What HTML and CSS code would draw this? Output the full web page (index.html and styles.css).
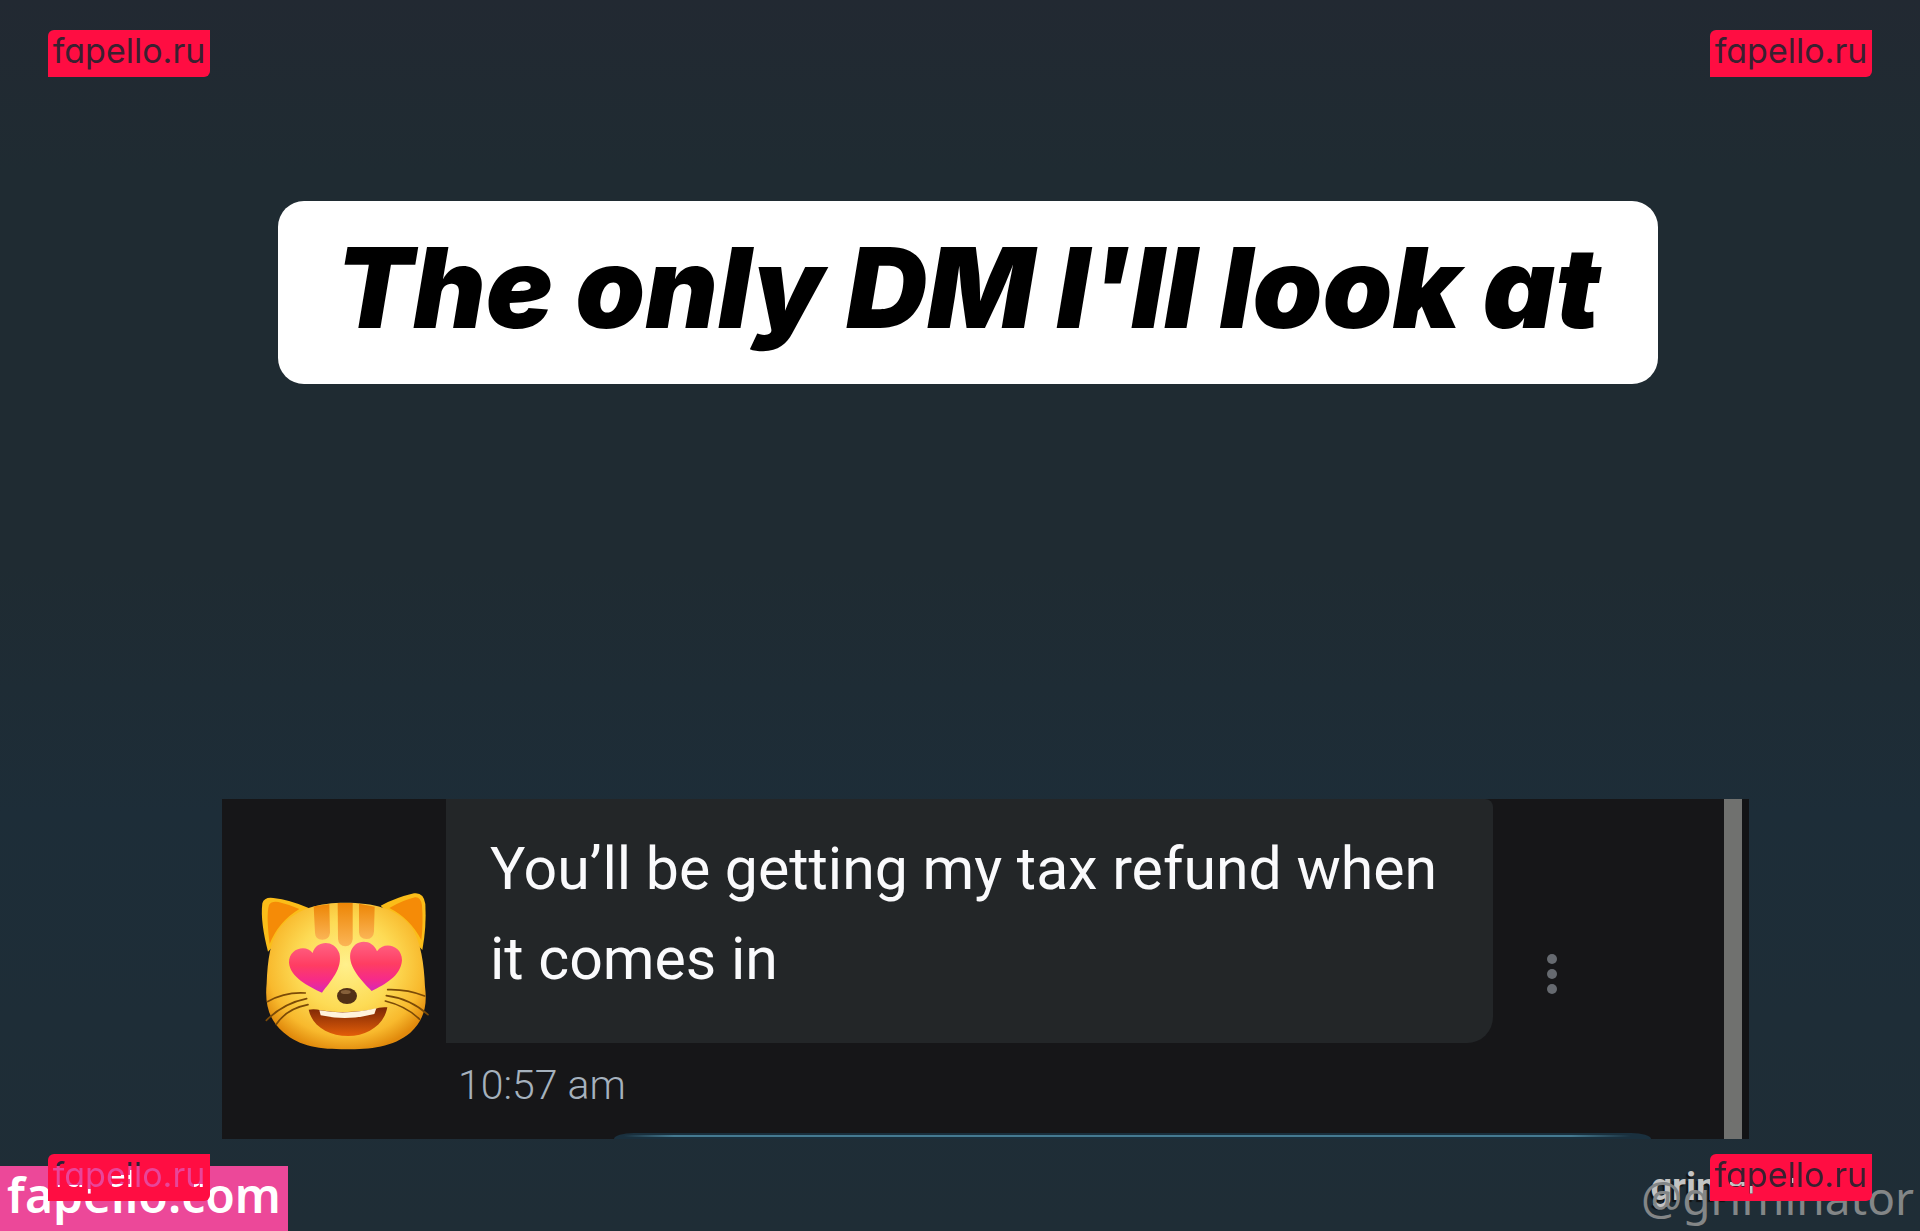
FILE: index.html
```html
<!DOCTYPE html>
<html lang="en">
<head>
<meta charset="utf-8">
<meta name="viewport" content="width=device-width, initial-scale=1">
<title>The only DM I'll look at</title>
<link rel="stylesheet" href="styles.css">
</head>
<body>
<main class="page">
  <h1 class="title">The only DM I'll look at</h1>

  <section class="chat">
    <div class="avatar">
      <svg viewBox="120 330 510 489" width="170" height="163" role="img" aria-label="Smiling cat with heart eyes">
        <defs>
          <radialGradient id="face" cx=".5" cy=".42" r=".6">
            <stop offset="0" stop-color="#fff08c"/>
            <stop offset=".5" stop-color="#fddb55"/>
            <stop offset=".82" stop-color="#f8b92d"/>
            <stop offset="1" stop-color="#e18a0c"/>
          </radialGradient>
          <linearGradient id="heart" x1="0" y1="0" x2="0" y2="1">
            <stop offset="0" stop-color="#ff6384"/>
            <stop offset=".45" stop-color="#ff3d62"/>
            <stop offset=".75" stop-color="#f62b88"/>
            <stop offset="1" stop-color="#d728b8"/>
          </linearGradient>
          <linearGradient id="stripe" x1="0" y1="0" x2="0" y2="1">
            <stop offset="0" stop-color="#ed8606"/>
            <stop offset="1" stop-color="#fbb556"/>
          </linearGradient>
          <linearGradient id="mouth" x1="0" y1="0" x2="0" y2="1">
            <stop offset="0" stop-color="#7b2605"/>
            <stop offset="1" stop-color="#e35e09"/>
          </linearGradient>
        </defs>
        <path d="M144 515C130 460 122 410 127 370Q133 350 160 354Q210 359 268 385Z" fill="#fbbd19"/>
        <path d="M149 492C143 440 140 400 147 375Q155 362 175 366Q210 374 238 387Q175 425 149 492Z" fill="#f58b07"/>
        <path d="M482 377Q530 352 582 340Q611 336 616 372Q620 440 607 510Z" fill="#fbbd19"/>
        <path d="M508 384Q550 360 585 352Q602 350 606 376Q610 430 604 480Q570 415 508 384Z" fill="#f58b07"/>
        <path d="M375 368C460 368 530 385 574 440C603 485 612 550 615 620C623 680 610 722 571 758C520 801 450 808 378 808C300 808 240 801 190 757C145 718 134 670 140 610C143 540 150 480 182 440C230 384 300 368 375 368Z" fill="url(#face)"/>
        <g fill="url(#stripe)">
          <path d="M281 379L328 373L330 458Q328 479 307 479Q286 479 285 458Z"/>
          <path d="M353 369H398V477Q396 499 376 499Q356 499 354 477Z"/>
          <path d="M417 371L464 380L462 455Q460 477 439 477Q418 477 417 457Z"/>
        </g>
        <g fill="url(#heart)">
          <path d="M306 638C265 619 210 590 207 548C206 503 260 492 278 519C287 481 343 476 358 520C369 565 331 605 306 638Z"/>
          <path d="M455 633C427 605 384 562 391 520C401 475 457 475 471 514C491 483 546 495 546 541C543 588 494 614 455 633Z"/>
        </g>
        <ellipse cx="381" cy="648" rx="30" ry="24" fill="#513016"/>
        <ellipse cx="377" cy="636" rx="15" ry="6" fill="#86603a"/>
        <path d="M266 689Q285 686 302 691Q380 704 462 688Q480 680 502 682C493 735 441 768 385 768C325 768 276 738 266 689Z" fill="url(#mouth)"/>
        <path d="M298 691Q382 706 469 685L463 702Q382 724 302 706Z" fill="#fff3dc"/>
        <g fill="none" stroke="#7b4a07" stroke-width="5" stroke-linecap="round">
          <path d="M256 639Q195 635 142 665"/>
          <path d="M260 656Q190 670 139 721"/>
          <path d="M264 674Q200 686 169 733"/>
          <path d="M503 629Q560 627 614 648"/>
          <path d="M499 647Q570 656 624 704"/>
          <path d="M496 663Q560 679 599 718"/>
        </g>
      </svg>
    </div>
    <div class="thread">
      <p class="bubble">You’ll be getting my tax refund when it comes in</p>
      <time class="time" datetime="10:57">10:57 am</time>
      <div class="next-bubble"></div>
    </div>
    <div class="actions">
      <button class="more" type="button" aria-label="More options">
        <svg viewBox="0 0 10 40" width="10" height="40" aria-hidden="true">
          <g fill="#666a70"><circle cx="5" cy="5" r="5"/><circle cx="5" cy="20" r="5"/><circle cx="5" cy="35" r="5"/></g>
        </svg>
      </button>
    </div>
    <div class="scrollbar"></div>
  </section>
</main>

<a class="site" href="#">fapello.com</a>
<span class="author">grim</span>
<span class="handle">@griminator</span>
<a class="badge top left" href="#"><span>fapello.ru</span></a>
<a class="badge top right" href="#"><span>fapello.ru</span></a>
<a class="badge bottom left" href="#"><span class="over-site">fapello.ru</span></a>
<a class="badge bottom right" href="#"><span class="over-author">fapello.ru</span></a>
</body>
</html>
```
FILE: styles.css
```css
* { box-sizing: border-box; }

body {
  position: relative;
  margin: 0;
  min-height: 100vh;
  overflow-x: hidden;
  background: linear-gradient(#222932 0%, #1f2b32 14%, #1f2b32 46%, #1d2d38 66%, #1f2d36 100%);
  font-family: Roboto, "Liberation Sans", sans-serif;
}

a { text-decoration: none; }

.page {
  display: flex;
  flex-direction: column;
  gap: 415px;
  padding: 201px 171px 92px 222px;
}

.title {
  margin: 0 91px 0 56px;
  padding: 24px 0 35px;
  border-radius: 26px;
  background: #fff;
  color: #000;
  font: italic 900 112px/124px Inter, sans-serif;
  text-align: center;
  white-space: nowrap;
}

.chat {
  display: flex;
  min-height: 340px;
  background: #161618;
}

.avatar {
  flex: 0 0 224px;
  padding: 91px 0 0 38px;
}

.avatar svg { display: block; }

.thread {
  display: flex;
  flex: 1;
  flex-direction: column;
}

.bubble {
  margin: 0;
  padding: 25px 24px 39px 44px;
  border-radius: 0 8px 26px 0;
  background: #232628;
  color: #fafafc;
  font-size: 59px;
  line-height: 90px;
}

.time {
  padding: 16px 12px 0;
  color: #a5b1bd;
  font-size: 41px;
  font-weight: 300;
  line-height: 52px;
}

.next-bubble {
  height: 6px;
  margin: auto -158px 0 168px;
  border-radius: 20px 20px 0 0 / 6px 6px 0 0;
  background:
    linear-gradient(90deg, transparent 10px, #457a91 60px, #457a91 calc(100% - 80px), transparent calc(100% - 20px)) 0 2px / 100% 2px no-repeat,
    #1a303e;
}

.actions {
  flex: 0 0 231px;
  padding: 155px 0 0 54px;
}

.more {
  display: block;
  padding: 0;
  border: 0;
  background: none;
  cursor: pointer;
}

.more svg { display: block; }

.scrollbar {
  flex: 0 0 25px;
  border-right: 7px solid #121315;
  background: #70716f;
}

.badge {
  position: absolute;
  width: 162px;
  height: 47px;
  border-radius: 6px 0;
  background: #ff0d42;
  color: #3a2030;
  font: 400 34px/42px Inter, sans-serif;
  font-feature-settings: "cv11";
  text-align: center;
  white-space: nowrap;
}

.top { top: 30px; }
.bottom { bottom: 30px; }
.left { left: 48px; }
.right { right: 48px; }

.badge span { display: block; }

.over-site {
  background:
    linear-gradient(#fff, #fff) 10px 31px / 24px 4px no-repeat,
    linear-gradient(#fff, #fff) 40px 35px / 6px 8px no-repeat,
    linear-gradient(#fff, #fff) 64px 21px / 18px 4px no-repeat,
    linear-gradient(#fff, #fff) 64px 30px / 18px 6px no-repeat,
    linear-gradient(#fff, #fff) 82px 16px / 6px 20px no-repeat,
    linear-gradient(#fff, #fff) 146px 30px / 10px 6px no-repeat,
    linear-gradient(#2b2337 12px, #e8459a 12px);
  background-clip: text;
  color: transparent;
}

.over-author {
  background:
    linear-gradient(#c4c4c4, #c4c4c4) 20px 28px / 16px 4px no-repeat,
    linear-gradient(#c4c4c4, #c4c4c4) 40px 32px / 5px 8px no-repeat,
    linear-gradient(#c4c4c4, #c4c4c4) 82px 24px / 6px 5px no-repeat,
    linear-gradient(#3a2030, #3a2030);
  background-clip: text;
  color: transparent;
}

.site {
  position: absolute;
  bottom: 0;
  left: 0;
  width: 288px;
  height: 65px;
  background: #ec4899;
  color: #fff;
  font: 600 48px/58px "Noto Sans", sans-serif;
  text-align: center;
}

.author {
  position: absolute;
  right: 191px;
  bottom: 20px;
  color: #c4c4c4;
  font: 700 38px/48px Roboto, sans-serif;
  text-shadow: -2px 2px 1px #111;
}

.handle {
  position: absolute;
  right: 6px;
  bottom: 2px;
  color: #838687;
  font: 46px/64px "Noto Sans", sans-serif;
}
```
